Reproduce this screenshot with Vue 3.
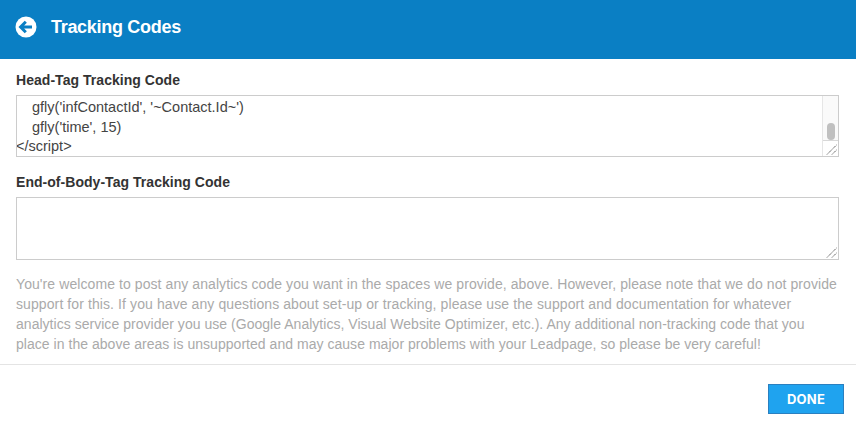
<script setup>
const code = ["gfly('infContactId', '~Contact.Id~')", "gfly('time', 15)"]
const note = [
  { t: "You're welcome to post any analytics code you want in the spaces we provide, above. However, please note that we do not provide", s: 0.08 },
  { t: "support for this. If you have any questions about set-up or tracking, please use the support and documentation for whatever", s: 0.095 },
  { t: "analytics service provider you use (Google Analytics, Visual Website Optimizer, etc.). Any additional non-tracking code that you", s: 0.03 },
  { t: "place in the above areas is unsupported and may cause major problems with your Leadpage, so please be very careful!", s: 0.035 }
]
</script>

<template>
  <div class="page">
    <header class="top">
      <svg class="back" width="22" height="22" viewBox="0 0 22 22">
        <circle cx="11" cy="11" r="10.5" fill="#fff" />
        <path d="M5.5 11H17M10.8 5.8 5.6 11l5.2 5.2" fill="none" stroke="#0a7fc4" stroke-width="3" />
      </svg>
      <h1>Tracking Codes</h1>
    </header>
    <main class="body">
      <h2>Head-Tag Tracking Code</h2>
      <div class="box first">
        <div class="code">
          <div v-for="l in code" :key="l" class="ind">{{ l }}</div>
          <div>&lt;/script&gt;</div>
        </div>
        <div class="side">
          <div class="track"><span class="thumb"></span></div>
          <div class="corner">
            <svg width="14" height="14" viewBox="0 0 14 14"><path d="M3 12.5 12.5 3M8 12.5 12.5 8" stroke="#555" stroke-width="1" stroke-dasharray="1.2 .6" fill="none" /></svg>
          </div>
        </div>
      </div>
      <h2 class="second">End-of-Body-Tag Tracking Code</h2>
      <div class="box two">
        <svg class="grip" width="14" height="14" viewBox="0 0 14 14"><path d="M3 12.5 12.5 3M8 12.5 12.5 8" stroke="#555" stroke-width="1" stroke-dasharray="1.2 .6" fill="none" /></svg>
      </div>
      <div class="note">
        <div v-for="l in note" :key="l.t" :style="{ letterSpacing: l.s + 'px' }">{{ l.t }}</div>
      </div>
    </main>
    <footer class="foot">
      <button class="done">DONE</button>
    </footer>
  </div>
</template>

<style>
html, body { margin: 0; background: #fff; }
</style>

<style scoped>
.page { width: 856px; height: 425px; overflow: hidden; font-family: "Liberation Sans", Arial, sans-serif; }
.top { height: 59px; background: #0a7fc4; display: flex; align-items: center; padding: 0 0 5px 15px; box-sizing: border-box; gap: 14px; }
.back { display: block; }
h1 { margin: 0; color: #fff; font-size: 18px; font-weight: 700; letter-spacing: -0.3px; }
.body { padding: 13px 17px 0 16px; box-sizing: border-box; border-bottom: 1px solid #e4e4e4; height: 306px; }
h2 { margin: 0; font-size: 14px; line-height: 17px; font-weight: 700; color: #333; letter-spacing: 0.04px; }
.second { margin-top: 17px; }
.box { position: relative; border: 1px solid #ccc; box-sizing: border-box; background: #fff; }
.first { height: 62px; display: flex; justify-content: space-between; margin-top: 6px; overflow: hidden; }
.two { height: 63px; margin-top: 6px; }
.code { font-size: 14.5px; line-height: 19.6px; color: #444; padding-top: 2px; margin-left: -1px; }
.ind { padding-left: 16px; }
.side { width: 15px; display: flex; flex-direction: column; border-left: 1px solid #e6e6e6; }
.track { flex: 1; background: #fafafa; display: flex; justify-content: center; align-items: flex-end; }
.thumb { width: 8px; height: 17px; border-radius: 4px; background: #c0c0c0; }
.corner { height: 15px; border-top: 1px solid #d8d8d8; display: flex; align-items: flex-end; justify-content: flex-end; background: #fff; }
.grip { position: absolute; right: 0; bottom: 0; }
.note { margin-top: 14px; font-size: 14px; line-height: 20px; color: #aaa; white-space: nowrap; }
.foot { display: flex; justify-content: flex-end; padding: 19px 12px 0 0; }
.done { width: 76px; height: 30px; padding: 0; background: #1fa3ef; border: 1px solid #2a80c0; color: #fff; font-family: Inter, "Liberation Sans", sans-serif; font-size: 13px; font-weight: 700; letter-spacing: 0.2px; }
</style>
